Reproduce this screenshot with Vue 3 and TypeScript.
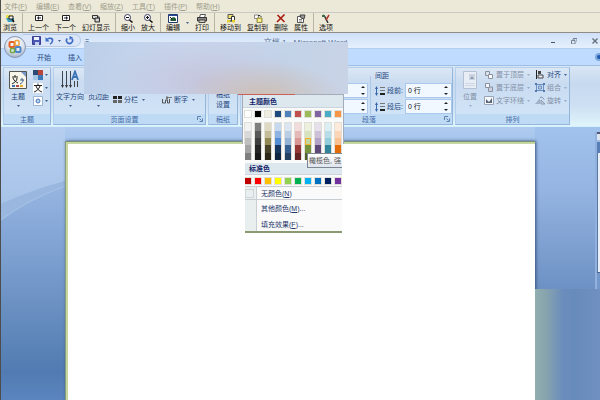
<script setup lang="ts">
import { h, ref } from 'vue'

interface Part {
  d: string
  fill?: string
  stroke?: string
  w?: number
}
interface IconDef {
  w: number
  h: number
  parts: Part[]
}

const icons: Record<string, IconDef> = {
  browse: { w: 10, h: 9, parts: [
    { d: 'M1 1h7v4H1z', fill: '#e8e04a' }, { d: 'M1 4h8v4H3z', fill: '#3d9fc0' },
    { d: 'M4 2h4v3H4z', fill: '#fff', stroke: '#222' }, { d: 'M7 5l2 3', stroke: '#111', w: 1.5 } ] },
  prev: { w: 10, h: 9, parts: [
    { d: 'M1.5 1.5h7v5h-7z', fill: '#fff', stroke: '#222' }, { d: 'M3 4l2-2v4zM5 3.5h2v1H5z', fill: '#223' } ] },
  next: { w: 10, h: 9, parts: [
    { d: 'M1.5 1.5h7v5h-7z', fill: '#fff', stroke: '#222' }, { d: 'M7 4L5 2v4zM3 3.5h2v1H3z', fill: '#223' } ] },
  slides: { w: 10, h: 9, parts: [
    { d: 'M1 1h5l3 2v4l-2 1-5-3z', fill: '#777' }, { d: 'M1.5 1.5h5v3h-5z', fill: '#ddd', stroke: '#333' },
    { d: 'M4 4h4.500v4H4z', fill: '#bbb', stroke: '#333' }, { d: 'M5 5.500h2.500v1H5z', fill: '#eee' } ] },
  zoomout: { w: 10, h: 9, parts: [
    { d: 'M1.500 3.500a3 3 0 1 0 6 0a3 3 0 1 0-6 0', fill: '#fff', stroke: '#3a3a66' },
    { d: 'M3 3.500h3', stroke: '#111' }, { d: 'M6.500 6l3 2.500', stroke: '#111', w: 1.5 } ] },
  zoomin: { w: 10, h: 9, parts: [
    { d: 'M1.500 3.500a3 3 0 1 0 6 0a3 3 0 1 0-6 0', fill: '#fff', stroke: '#3a3a66' },
    { d: 'M3 3.500h3M4.500 2v3', stroke: '#111' }, { d: 'M6.500 6l3 2.500', stroke: '#111', w: 1.5 } ] },
  edit: { w: 10, h: 9, parts: [
    { d: 'M.5.500h9v8h-9z', fill: '#fff', stroke: '#223a70' }, { d: 'M1 1h8v1H1z', fill: '#2a4b9c' },
    { d: 'M2 6c1-3 5-4 6-1v2H3z', fill: '#1f5a35' }, { d: 'M2 3l2 2', stroke: '#111' } ] },
  print: { w: 10, h: 9, parts: [
    { d: 'M3.500.500h5l-1 3h-5z', fill: '#fff', stroke: '#555' }, { d: 'M.5 3.500h9V7h-9z', fill: '#888', stroke: '#333' },
    { d: 'M2 6h6v2.500H2z', fill: '#d5d5c0', stroke: '#444' } ] },
  move: { w: 10, h: 9, parts: [
    { d: 'M2 .5h5v4H2z', fill: '#f3e86a', stroke: '#555' }, { d: 'M5.500 2.500h3v4h-3z', fill: '#fff', stroke: '#333' },
    { d: 'M1 6h3v2.500H1zM6 6h3v2.500H6z', fill: '#e5cf2c' }, { d: 'M4 7h2', stroke: '#111' } ] },
  copy: { w: 10, h: 9, parts: [
    { d: 'M1.500 1h4v3.500h-4z', fill: '#fff', stroke: '#888' }, { d: 'M5 1.500h2l1.500 1.500', stroke: '#333' },
    { d: 'M4 4h5v4.500H4z', fill: '#eadc47', stroke: '#8d8753' }, { d: 'M5 5.500h3v2H5z', fill: '#fff6a8' } ] },
  remove: { w: 10, h: 9, parts: [{ d: 'M1.500 1l7 7M8.500.500L1 8', stroke: '#a81a10', w: 1.6 }] },
  props: { w: 10, h: 9, parts: [
    { d: 'M1.500 2.500h6v6h-6z', fill: '#fff', stroke: '#555' }, { d: 'M4 1h5l-1 4-3-1z', fill: '#999', stroke: '#444' },
    { d: 'M3 5.500h3M3 7h3', stroke: '#888' } ] },
  options: { w: 10, h: 9, parts: [
    { d: 'M2 1l2 2 3 6', stroke: '#333', w: 1.5 }, { d: 'M1 1h3v2H1z', fill: '#3b6b4c' }, { d: 'M8 1L5 6', stroke: '#b13a2d', w: 1.5 } ] },
  save: { w: 9, h: 9, parts: [
    { d: 'M.5.500h8v8h-8z', fill: '#4b59b5', stroke: '#3a3f91' }, { d: 'M2 1h5v3H2z', fill: '#eef3ff' }, { d: 'M3 6h4v3H3z', fill: '#c5d0ee' } ] },
  undo: { w: 9, h: 9, parts: [
    { d: 'M2 3.500c3-2.500 6-1 5.500 1.500C7.300 6.500 6.500 7.500 5 8', stroke: '#3e6cc4', w: 1.6 }, { d: 'M.5 1v4.500h4z', fill: '#3e6cc4' } ] },
  redo: { w: 9, h: 9, parts: [
    { d: 'M2.300 2.500a3 3 0 1 0 4.400 0', stroke: '#3e6cc4', w: 1.6 }, { d: 'M4.500 0v4L8 1.500z', fill: '#3e6cc4' } ] },
  theme: { w: 18, h: 18, parts: [
    { d: 'M.5.500h17v17H.5z', fill: '#f8f6ea', stroke: '#55564f' }, { d: 'M12 1h5v5z', fill: '#7796c6' },
    { d: 'M3 6h6M6 4v2M4 7c1 3 3 4 5 5M8 7c0 3-2 4-5 6', stroke: '#222' },
    { d: 'M11 9h4M13 7v2M11 13c2-1 3-2 3-4', stroke: '#3e5d88' },
    { d: 'M3 14h3v2H3z', fill: '#3e70b4' }, { d: 'M7 14h3v2H7z', fill: '#b34a42' }, { d: 'M11 14h3v2h-3z', fill: '#dfad35' } ] },
  colors: { w: 10, h: 10, parts: [
    { d: 'M0 0h10v10H0z', fill: '#dfe9f5' }, { d: 'M0 0h5v5H0z', fill: '#2e4b78' }, { d: 'M5 0h5v5H5z', fill: '#b8453c' },
    { d: 'M0 5h5v5H0z', fill: '#a8c6e6' }, { d: 'M5 5h5v5H5z', fill: '#3c78b5' } ] },
  fonts: { w: 10, h: 10, parts: [
    { d: 'M0 0h10v10H0z', fill: '#fff' }, { d: 'M1 2.500h8M5 .5v2M3 3c1 3 3 5 6 6M7 3C6 6 4 8 1 9', stroke: '#222' } ] },
  effects: { w: 10, h: 10, parts: [
    { d: 'M.5.500h9v9h-9z', fill: '#fff', stroke: '#9bb4d2' }, { d: 'M3 5a2 2 0 1 0 4 0a2 2 0 1 0-4 0', fill: '#b7d1f3', stroke: '#4a77b4' } ] },
  textdir: { w: 18, h: 19, parts: [
    { d: 'M1.500 1v15M5.500 1v15M9.500 1v15', stroke: '#3f4652' }, { d: 'M0 15h3l-1.500 3zM4 15h3l-1.500 3zM8 15h3l-1.500 3z', fill: '#333' },
    { d: 'M11 10L14 1.500l3 8.500M12 7h4', stroke: '#3d73b5', w: 1.8 }, { d: 'M13.500 11v6M16.500 11v6', stroke: '#444' } ] },
  columns: { w: 9, h: 9, parts: [
    { d: 'M0 1h4v3H0zM5 1h4v3H5z', fill: '#222' }, { d: 'M0 5h4v3H0zM5 5h4v3H5z', fill: '#666' } ] },
  hyphen: { w: 10, h: 9, parts: [
    { d: 'M.5 4v4h3V5h2v3h2V4', stroke: '#555' }, { d: 'M5 2.500h5', stroke: '#777' }, { d: 'M4 1.500h2v3H4z', fill: '#777' } ] },
  spacing: { w: 10, h: 10, parts: [
    { d: 'M1.500 1v8', stroke: '#3667a8' }, { d: 'M0 3l1.500-3L3 3zM0 7l1.500 3L3 7z', fill: '#3667a8' },
    { d: 'M5 1.500h5M5 4.500h5', stroke: '#777' }, { d: 'M5 7h5v2H5z', fill: '#222' } ] },
  position: { w: 14, h: 18, parts: [
    { d: 'M.5.500h13v17H.5z', fill: '#e9eef6', stroke: '#b5c0d2' }, { d: 'M6 3h6v6H6z', fill: '#ccd4e2' },
    { d: 'M7 8l2-3 2 3z', fill: '#8f9bb0' }, { d: 'M2 12.500h10M2 14.500h10', stroke: '#cfd7e4' } ] },
  front: { w: 10, h: 9, parts: [
    { d: 'M1.500 1.500h4v4h-4z', fill: '#dce1ea', stroke: '#8a92a2' }, { d: 'M4.500 4.500h4v4h-4z', fill: '#fff', stroke: '#8a92a2' } ] },
  back: { w: 10, h: 9, parts: [
    { d: 'M4.500 4h4v4.500h-4z', fill: '#ccd1dc', stroke: '#8a92a2' }, { d: 'M1.500.500h4v4h-4z', fill: '#f3f4f7', stroke: '#8a92a2' } ] },
  wrap: { w: 10, h: 9, parts: [
    { d: 'M.5.500h9v8h-9z', fill: '#f5f7fb', stroke: '#9aa4b6' }, { d: 'M2 3l3 3 3-4v5H2z', fill: '#596579' } ] },
  align: { w: 10, h: 9, parts: [
    { d: 'M1.500 0v9', stroke: '#222' }, { d: 'M3 1h3v3H3z', fill: '#444' }, { d: 'M3 5h5v3H3z', fill: '#e8eef7', stroke: '#444' } ] },
  group: { w: 10, h: 9, parts: [
    { d: 'M1.500 1.500h7v6h-7z', stroke: '#6c8fc2' }, { d: 'M0 0h2v2H0zM8 0h2v2H8zM0 7h2v2H0zM8 7h2v2H8z', fill: '#5276ad' },
    { d: 'M3.500 3h3v3h-3z', fill: '#b9cbe5', stroke: '#6c8fc2' } ] },
  rotate: { w: 10, h: 9, parts: [
    { d: 'M0 8h5V2z', fill: '#9fb0c9' }, { d: 'M6 8h4L6 4z', fill: '#cbd5e4', stroke: '#8998b0' }, { d: 'M5 1.500c2-1 3 0 4 2', stroke: '#7d8ca5' } ] },
  down: { w: 3, h: 2, parts: [{ d: 'M0 0h3L1.500 2z', fill: '#46648e' }] },
  spin: { w: 4, h: 9, parts: [{ d: 'M0 2l2-2 2 2zM0 7l2 2 2-2z', fill: '#222' }] },
  launcher: { w: 6, h: 6, parts: [{ d: 'M.5 4V.500H4', stroke: '#5d82b0' }, { d: 'M5.500 2.500v3h-3M2.500 2.500l2 2', stroke: '#5d82b0' }] },
  minimize: { w: 6, h: 6, parts: [{ d: 'M1 4h4v1H1z', fill: '#4a5666' }] },
  restore: { w: 6, h: 6, parts: [{ d: 'M2 .5h4V4M.5 2.500h3.500V6H.5zM1 2h3', stroke: '#77828f' }] },
  close: { w: 6, h: 6, parts: [{ d: 'M.5.500l5 5M5.500.500l-5 5', stroke: '#66717e', w: 1.4 }] },
}

const Icon = (props: { name: string }) => {
  const def = icons[props.name]
  return h(
    'svg',
    { width: def.w, height: def.h, viewBox: `0 0 ${def.w} ${def.h}`, 'aria-hidden': 'true' },
    def.parts.map((p) =>
      h('path', { d: p.d, fill: p.fill ?? 'none', stroke: p.stroke ?? 'none', 'stroke-width': p.w ?? 1 }),
    ),
  )
}
Icon.props = ['name']

const menus = ['文件(F)', '编辑(E)', '查看(V)', '缩放(Z)', '工具(T)', '插件(P)', '帮助(H)'].map((m) => ({
  text: m.slice(0, 2),
  key: m[3],
}))

const tools: { icon: string; label: string }[][] = [
  [{ icon: 'browse', label: '浏览' }],
  [{ icon: 'prev', label: '上一个' }, { icon: 'next', label: '下一个' }, { icon: 'slides', label: '幻灯显示' }],
  [{ icon: 'zoomout', label: '缩小' }, { icon: 'zoomin', label: '放大' }],
  [{ icon: 'edit', label: '编辑' }, { icon: 'down', label: '' }, { icon: 'print', label: '打印' }],
  [{ icon: 'move', label: '移动到' }, { icon: 'copy', label: '复制到' }, { icon: 'remove', label: '删除' }, { icon: 'props', label: '属性' }],
  [{ icon: 'options', label: '选项' }],
]

const arrange = [
  { icon: 'front', label: '置于顶层', off: true },
  { icon: 'align', label: '对齐', off: false },
  { icon: 'back', label: '置于底层', off: true },
  { icon: 'group', label: '组合', off: true },
  { icon: 'wrap', label: '文字环绕', off: true },
  { icon: 'rotate', label: '旋转', off: true },
]

const before = ref('0 行')
const after = ref('0 行')

const themeColors = [
  { base: '#ffffff', tones: ['#f2f2f2', '#d8d8d8', '#bfbfbf', '#a5a5a5', '#7f7f7f'] },
  { base: '#000000', tones: ['#7f7f7f', '#595959', '#3f3f3f', '#262626', '#181818'] },
  { base: '#eeece1', tones: ['#ddd9c3', '#c4bd97', '#938953', '#494429', '#2b2818'] },
  { base: '#1f497d', tones: ['#c6d9f0', '#8db3e2', '#548dd4', '#17365d', '#0f243e'] },
  { base: '#4f81bd', tones: ['#dbe5f1', '#b8cce4', '#95b3d7', '#366092', '#244061'] },
  { base: '#c0504d', tones: ['#f2dcdb', '#e5b9b7', '#d99694', '#953734', '#632423'] },
  { base: '#9bbb59', tones: ['#ebf1dd', '#d7e3bc', '#c3d69b', '#76923c', '#4f6128'] },
  { base: '#8064a2', tones: ['#e5e0ec', '#ccc1d9', '#b2a2c7', '#5f497a', '#3f3151'] },
  { base: '#4bacc6', tones: ['#dbeef3', '#b7dde8', '#92cddc', '#31859b', '#205867'] },
  { base: '#f79646', tones: ['#fdeada', '#fbd5b5', '#fac08f', '#e36c09', '#974806'] },
]
const standardColors = ['#c00000', '#ff0000', '#ffc000', '#ffff00', '#92d050', '#00b050', '#00b0f0', '#0070c0', '#002060', '#7030a0']
</script>

<template>
  <div class="app">
    <nav class="menubar">
      <button v-for="m in menus" :key="m.key">{{ m.text }}(<u>{{ m.key }}</u>)</button>
    </nav>

    <div class="toolbar">
      <div v-for="(set, i) in tools" :key="i" class="toolset">
        <button v-for="t in set" :key="t.icon" class="tool">
          <Icon :name="t.icon" />
          <span v-if="t.label">{{ t.label }}</span>
        </button>
      </div>
    </div>

    <header class="word-head">
      <button class="orb" aria-label="Office">
        <svg width="24" height="24" viewBox="0 0 24 24">
          <defs>
            <radialGradient id="orbFill" cx=".5" cy=".3" r=".75">
              <stop offset="0" stop-color="#ffffff" />
              <stop offset=".6" stop-color="#d9dfe9" />
              <stop offset="1" stop-color="#98a8c0" />
            </radialGradient>
          </defs>
          <circle cx="12" cy="12" r="10.500" fill="url(#orbFill)" stroke="#8799b5" />
          <rect x="6.500" y="7" width="5" height="5" rx="1" fill="none" stroke="#e2622c" stroke-width="2" />
          <rect x="12" y="5.500" width="4" height="5" rx="1" fill="none" stroke="#efa23b" stroke-width="1.500" />
          <rect x="12.500" y="12" width="5" height="5" rx="1" fill="none" stroke="#4b84c9" stroke-width="2" />
          <rect x="7.500" y="13.500" width="4" height="4" rx="1" fill="none" stroke="#6fa83c" stroke-width="1.500" />
        </svg>
      </button>
      <div class="titlebar">
        <div class="quick">
          <button aria-label="保存"><Icon name="save" /></button>
          <button aria-label="撤消"><Icon name="undo" /></button>
          <button aria-label="撤消列表"><Icon name="down" /></button>
          <button aria-label="恢复"><Icon name="redo" /></button>
        </div>
        <span class="quick-more">=</span>
        <h1>文档 1 - Microsoft Word</h1>
        <div class="window-buttons">
          <button aria-label="最小化"><Icon name="minimize" /></button>
          <button aria-label="还原"><Icon name="restore" /></button>
          <button aria-label="关闭"><Icon name="close" /></button>
        </div>
      </div>
      <nav class="tabs">
        <button>开始</button>
        <button>插入</button>
        <button class="help" aria-label="帮助"></button>
      </nav>
      <div class="smudge"></div>
    </header>

    <div class="ribbon">
      <section class="group g-theme">
        <div class="body">
          <button class="big"><Icon name="theme" /><span>主题</span><Icon name="down" /></button>
          <div class="stack">
            <button aria-label="颜色"><Icon name="colors" /><Icon name="down" /></button>
            <button aria-label="字体"><Icon name="fonts" /><Icon name="down" /></button>
            <button aria-label="效果"><Icon name="effects" /><Icon name="down" /></button>
          </div>
        </div>
        <footer>主题</footer>
      </section>

      <section class="group g-page">
        <div class="body">
          <button class="big"><Icon name="textdir" /><span>文字方向</span><Icon name="down" /></button>
          <button class="big"><span>页边距</span><Icon name="down" /></button>
          <button class="row wide"><Icon name="columns" /><span>分栏</span><Icon name="down" /></button>
          <button class="row"><Icon name="hyphen" /><span>断字</span><Icon name="down" /></button>
        </div>
        <footer class="launchable">页面设置<Icon name="launcher" class="launch" /></footer>
      </section>

      <section class="group g-grid">
        <div class="body"><button class="big"><span>稿纸</span><span>设置</span></button></div>
        <footer>稿纸</footer>
      </section>

      <section class="group g-background">
        <div class="body"></div>
        <footer></footer>
      </section>

      <section class="group g-para">
        <div class="body">
          <div class="indent">
            <input aria-label="左缩进" type="text" /><input aria-label="右缩进" type="text" />
            <Icon name="spin" class="s1" /><Icon name="spin" class="s2" />
          </div>
          <fieldset>
            <legend>间距</legend>
            <div class="field">
              <Icon name="spacing" /><label for="sp-before">段前:</label>
              <div class="spinner"><input id="sp-before" v-model="before" type="text" /><Icon name="spin" /></div>
            </div>
            <div class="field">
              <Icon name="spacing" /><label for="sp-after">段后:</label>
              <div class="spinner"><input id="sp-after" v-model="after" type="text" /><Icon name="spin" /></div>
            </div>
          </fieldset>
        </div>
        <footer class="launchable">段落<Icon name="launcher" class="launch" /></footer>
      </section>

      <section class="group g-arrange">
        <div class="body">
          <button class="big off"><Icon name="position" /><span>位置</span><Icon name="down" /></button>
          <div class="arrange">
            <button v-for="a in arrange" :key="a.label" class="row" :class="{ off: a.off }">
              <Icon :name="a.icon" /><span>{{ a.label }}</span><Icon name="down" />
            </button>
          </div>
        </div>
        <footer>排列</footer>
      </section>

      <div class="open-edge"></div>
      <div class="popup">
        <h2>主题颜色</h2>
        <div class="swatches">
          <button v-for="c in themeColors" :key="c.base" class="swatch" :style="{ background: c.base }" :aria-label="c.base"></button>
        </div>
        <div class="tones">
          <div v-for="(c, ci) in themeColors" :key="c.base" class="tone-column">
            <button
              v-for="(t, ti) in c.tones"
              :key="t"
              :class="{ picked: ci === 6 && ti === 2 }"
              :style="{ background: t }"
              :aria-label="t"
            ></button>
          </div>
        </div>
        <h2 class="standard-title">标准色</h2>
        <div class="swatches standard">
          <button v-for="c in standardColors" :key="c" class="swatch" :style="{ background: c }" :aria-label="c"></button>
        </div>
        <div class="choices">
          <button class="none"><i></i>无颜色(<u>N</u>)</button>
          <button>其他颜色(<u>M</u>)...</button>
          <button>填充效果(<u>F</u>)...</button>
        </div>
        <div class="tip">橄榄色, 强</div>
      </div>
    </div>

    <main class="workspace">
      <div class="left-gutter">
        <svg viewBox="0 0 64 273" preserveAspectRatio="none" aria-hidden="true">
          <defs>
            <linearGradient id="sky" x1="0" y1="0" x2="0" y2="1">
              <stop offset="0" stop-color="#b6cff1" />
              <stop offset=".33" stop-color="#a4c1e5" />
            </linearGradient>
            <linearGradient id="deep" gradientUnits="userSpaceOnUse" x1="0" y1="60" x2="0" y2="273">
              <stop offset="0" stop-color="#97b5e0" />
              <stop offset=".2" stop-color="#86a8d8" />
              <stop offset=".55" stop-color="#6b91c2" />
              <stop offset=".87" stop-color="#517bb1" />
              <stop offset="1" stop-color="#5b85bf" />
            </linearGradient>
          </defs>
          <path d="M0 0h64v273H0z" fill="url(#sky)" />
          <path d="M0 77Q30 63 64 54v40H0z" fill="#9ab7df" />
          <path d="M0 93Q28 72 64 59v214H0z" fill="url(#deep)" />
          <path d="M0 93Q28 72 64 59" fill="none" stroke="#a9c4e8" />
        </svg>
      </div>
      <div class="page"></div>
      <div class="right-gutter">
        <div class="haze"></div>
        <div class="pane"><i></i></div>
      </div>
    </main>
  </div>
</template>

<style>
body {
  margin: 0;
}
</style>

<style scoped>
.app {
  display: grid;
  grid-template-rows: 12px 21px 32px 62px 1fr;
  grid-template-columns: 1fr;
  min-height: 100vh;
  box-sizing: border-box;
  border-left: 1px solid #4d4d4d;
  overflow: hidden;
  font-family: 'Liberation Sans', 'Noto Sans CJK SC', sans-serif;
  font-size: 7px;
  line-height: 9px;
  color: #24477d;
}
.app * {
  box-sizing: border-box;
}
button {
  margin: 0;
  padding: 0;
  border: 0;
  background: none;
  font: inherit;
  color: inherit;
  white-space: nowrap;
}
input {
  min-width: 0;
  margin: 0;
  font: inherit;
  color: #111;
}
svg {
  display: block;
  flex: none;
}

.menubar {
  display: flex;
  padding-left: 3px;
  background: #ece9d8;
  color: #a09d8c;
}
.menubar button {
  width: 32px;
  text-align: left;
}

.toolbar {
  display: flex;
  border-top: 1px solid #c9cac6;
  border-bottom: 1px solid #8f8d86;
  background: #ece9d8;
  color: #111;
}
.toolset {
  display: flex;
  gap: 6px;
  padding: 1px 5px 0 5px;
  border-left: 1px solid #b8b5a5;
}
.toolset:first-child {
  padding-left: 2px;
  border-left: 0;
}
.tool {
  display: flex;
  flex-direction: column;
  align-items: center;
  justify-content: center;
}

.word-head {
  position: relative;
  display: grid;
  grid-template-rows: 15px 17px;
}
.titlebar {
  display: flex;
  align-items: center;
  padding: 0 2px 0 22px;
  background: linear-gradient(#cfe0f8, #e6f0fc);
}
.quick {
  display: flex;
  align-items: center;
  gap: 4px;
  height: 13px;
  padding: 0 6px 0 9px;
  border: 1px solid #b4c9e6;
  border-left: 0;
  border-radius: 0 7px 7px 0;
  background: #dbe7f8;
}
.quick-more {
  margin-left: 4px;
}
h1 {
  flex: 1;
  margin: 0;
  padding: 4px 28px 0 0;
  font-size: 8px;
  line-height: 10px;
  font-weight: 400;
  text-align: center;
  color: #5a7192;
}
.window-buttons {
  display: flex;
  gap: 15px;
}
.tabs {
  display: flex;
  align-items: center;
  gap: 17px;
  padding-left: 36px;
  overflow: hidden;
  border-top: 1px solid #b2cfee;
  background: #bfdbff;
}
.help {
  width: 8px;
  height: 8px;
  margin: 0 -3px 0 auto;
  border: 2px solid #7ea9dd;
  border-radius: 50%;
  background: #1f58ad;
}
.orb {
  position: absolute;
  z-index: 2;
  top: 2px;
  left: 2px;
}
.smudge {
  position: absolute;
  z-index: 4;
  top: 9px;
  left: 83px;
  width: 264px;
  height: 52px;
  background:
    radial-gradient(ellipse 80px 36px at 68% 105%, #cdbfb5 0, #cdbfb500 100%),
    radial-gradient(ellipse 100px 50px at 46% 75%, #c5c5dc 0, #c5c5dc00 100%),
    linear-gradient(100deg, #bccfe8, #c9d9f0 40%, #c3d3e8 75%, #c9d3e6);
}

.ribbon {
  position: relative;
  display: flex;
  gap: 2px;
  padding: 1px 2px 1px 2px;
  border-top: 1px solid #9dbde5;
  border-bottom: 1px solid #d4f0fa;
  background: linear-gradient(#d9e6f5, #c6d9ee 30%, #cfe2f4 70%, #dff4fa);
}
.group {
  display: flex;
  flex: none;
  flex-direction: column;
  border: 1px solid #b3cfec;
  border-right-color: #94b6dc;
  border-bottom-color: #94b6dc;
  background: linear-gradient(#dbe7f5, #c9dbf0 28%, #d3e6f9);
}
.body {
  display: flex;
  flex: 1;
}
.group footer {
  display: flex;
  position: relative;
  align-items: center;
  justify-content: center;
  height: 10px;
  background: #bfdaf4;
  color: #3f6aa8;
}
.group .launchable {
  padding-right: 10px;
}
.launch {
  position: absolute;
  right: 2px;
}
.g-theme {
  width: 48px;
}
.g-page {
  width: 153px;
}
.g-grid {
  width: 30px;
}
.g-background {
  width: 53px;
}
.g-para {
  width: 158px;
}
.g-arrange {
  width: 115px;
}
.big {
  display: flex;
  flex-direction: column;
  align-items: center;
  justify-content: flex-end;
  gap: 4px;
  padding-bottom: 7px;
}
.big > span {
  line-height: 8px;
}
.g-theme .body {
  gap: 6px;
  padding-left: 5px;
}
.stack {
  display: flex;
  flex-direction: column;
  gap: 3px;
  padding-top: 2px;
}
.stack button,
.row {
  display: flex;
  align-items: center;
  gap: 2px;
}
.g-page .body {
  gap: 4px;
  padding-left: 2px;
}
.g-page .row {
  align-self: flex-end;
  gap: 2px;
  margin-bottom: 10px;
}
.g-page .row > svg:last-child {
  margin-left: 2px;
}
.g-page .wide {
  margin-right: 13px;
}
.g-grid .body {
  justify-content: center;
}
.g-grid .big {
  gap: 2px;
  padding-bottom: 5px;
}
.g-para .body {
  justify-content: flex-end;
  gap: 2px;
}
.indent {
  display: grid;
  position: relative;
  grid-template-rows: 15px 15px;
  gap: 1px;
  width: 64px;
  padding-top: 15px;
}
.indent input,
.spinner {
  border: 1px solid #aac8ec;
  background: #f2f8ff;
}
.s1,
.s2 {
  position: absolute;
  right: 3px;
}
.s1 {
  top: 18px;
}
.s2 {
  top: 34px;
}
fieldset {
  display: grid;
  grid-template-rows: 15px 15px;
  gap: 1px;
  margin: 3px 0 0;
  padding: 3px 0 0 4px;
  border: 0;
  border-left: 1px solid #abc7e6;
}
legend {
  padding: 0;
}
.field {
  display: grid;
  grid-template-columns: 10px 16px 47px;
  align-items: center;
  gap: 2px;
}
.spinner {
  display: flex;
  align-items: center;
  height: 15px;
  padding: 0 3px 0 0;
}
.spinner input {
  flex: 1;
  padding: 0 2px;
  border: 0;
  background: transparent;
}
.g-arrange .body {
  gap: 7px;
  padding-left: 7px;
}
.off {
  color: #8390a6;
}
.off > svg:last-child {
  opacity: 0.4;
}
.arrange {
  display: grid;
  grid-template-columns: auto auto;
  grid-auto-rows: 13px;
  column-gap: 5px;
  align-content: start;
}
.arrange .row > svg:last-child {
  margin-left: 1px;
}

.open-edge {
  position: absolute;
  z-index: 4;
  top: 28px;
  left: 237px;
  width: 57px;
  height: 1px;
  background: #c9605a;
}
.popup {
  position: absolute;
  z-index: 3;
  top: 28px;
  left: 241px;
  width: 102px;
  border: 1px solid #a3acb8;
  border-bottom: 2px solid #8b9a70;
  background: #fafafa;
  clip-path: polygon(0 0, 100% 0, 100% 50px, calc(100% - 2px) 50px, calc(100% - 2px) 100%, 3px 100%, 3px 50px, 0 50px);
}
.popup h2 {
  height: 13px;
  margin: 0;
  padding-left: 6px;
  border-bottom: 1px solid #ccd5de;
  background: #dde7ee;
  font-size: 7px;
  line-height: 13px;
  font-weight: 700;
  color: #15266a;
}
.swatches {
  display: flex;
  gap: 2px;
  padding: 2px 0 4px 1px;
}
.swatch {
  width: 8px;
  height: 8px;
  border: 1px solid #e0e0d8;
}
.tones {
  display: flex;
  gap: 2px;
  padding: 0 0 3px 1px;
}
.tone-column {
  display: grid;
  grid-template-rows: 8px 7px 7px 8px 7px;
  width: 8px;
  border: 1px solid #e0e0d8;
  border-bottom: 0;
}
.picked {
  border: 1px solid #efb52e;
}
.popup .standard-title {
  height: 12px;
  line-height: 11px;
}
.swatches.standard {
  padding: 2px 0 1px 1px;
}
.choices {
  display: grid;
  grid-template-rows: 13px 17px 14px;
  border-top: 1px solid #c8cdd2;
  background: linear-gradient(90deg, #e9eeee 13px, #c9cfd3 13px, #c9cfd3 14px, #fafafa 14px);
  color: #24366a;
}
.choices button {
  display: flex;
  align-items: center;
  padding-left: 18px;
}
.choices .none {
  border-bottom: 1px solid #c8cdd2;
  padding-left: 2px;
}
.none i {
  width: 9px;
  height: 9px;
  margin-right: 7px;
  border: 1px solid #d0d6d6;
}
.tip {
  position: absolute;
  top: 58px;
  left: 64px;
  right: 0;
  height: 15px;
  padding-left: 1px;
  border: 1px solid #7d8792;
  border-right: 0;
  background: linear-gradient(#fff, #dfe4ee);
  line-height: 13px;
  color: #555;
  white-space: nowrap;
}

.workspace {
  display: grid;
  grid-template-columns: 64px 1fr 65px;
  background: linear-gradient(#b0cbf0, #a2c1ea 20px, #a2c1ea);
}
.left-gutter {
  position: relative;
}
.left-gutter svg {
  position: absolute;
  width: 100%;
  height: 100%;
}
.page {
  position: relative;
  z-index: 1;
  margin-top: 14px;
  border-top: 1px solid #7b8c76;
  border-left: 1px solid #8a9d7a;
  background: #fff;
  box-shadow:
    inset 2px 2px #c5d69f,
    1px 0 3px #34507a;
}
.right-gutter {
  position: relative;
  display: grid;
  grid-template-rows: 162px 1fr;
  background: linear-gradient(#a2c3ee, #96b5e2 60px, #6d91c4 162px, #678bbd);
}
.haze {
  grid-row: 2;
  position: relative;
  z-index: 2;
  background: linear-gradient(90deg, #91aeb0, #86a2ae 12px, #6b8dbd 28px, #678bbb 40px, #7090c2);
}
.pane {
  position: absolute;
  right: 0;
  top: 5px;
  width: 5px;
  height: 157px;
  border-left: 2px solid #92b1df;
  background: linear-gradient(#557 0 2px, #dde5f0 2px 8px, #9dbbe5 8px 10px, #587fb5 10px 21px, #e9f0fa 21px 140px, #49638c 140px 141px, #7598cb 141px);
}
.pane i {
  display: block;
  width: 1px;
  height: 119px;
  margin-top: 21px;
  background: #59779f;
}
</style>
